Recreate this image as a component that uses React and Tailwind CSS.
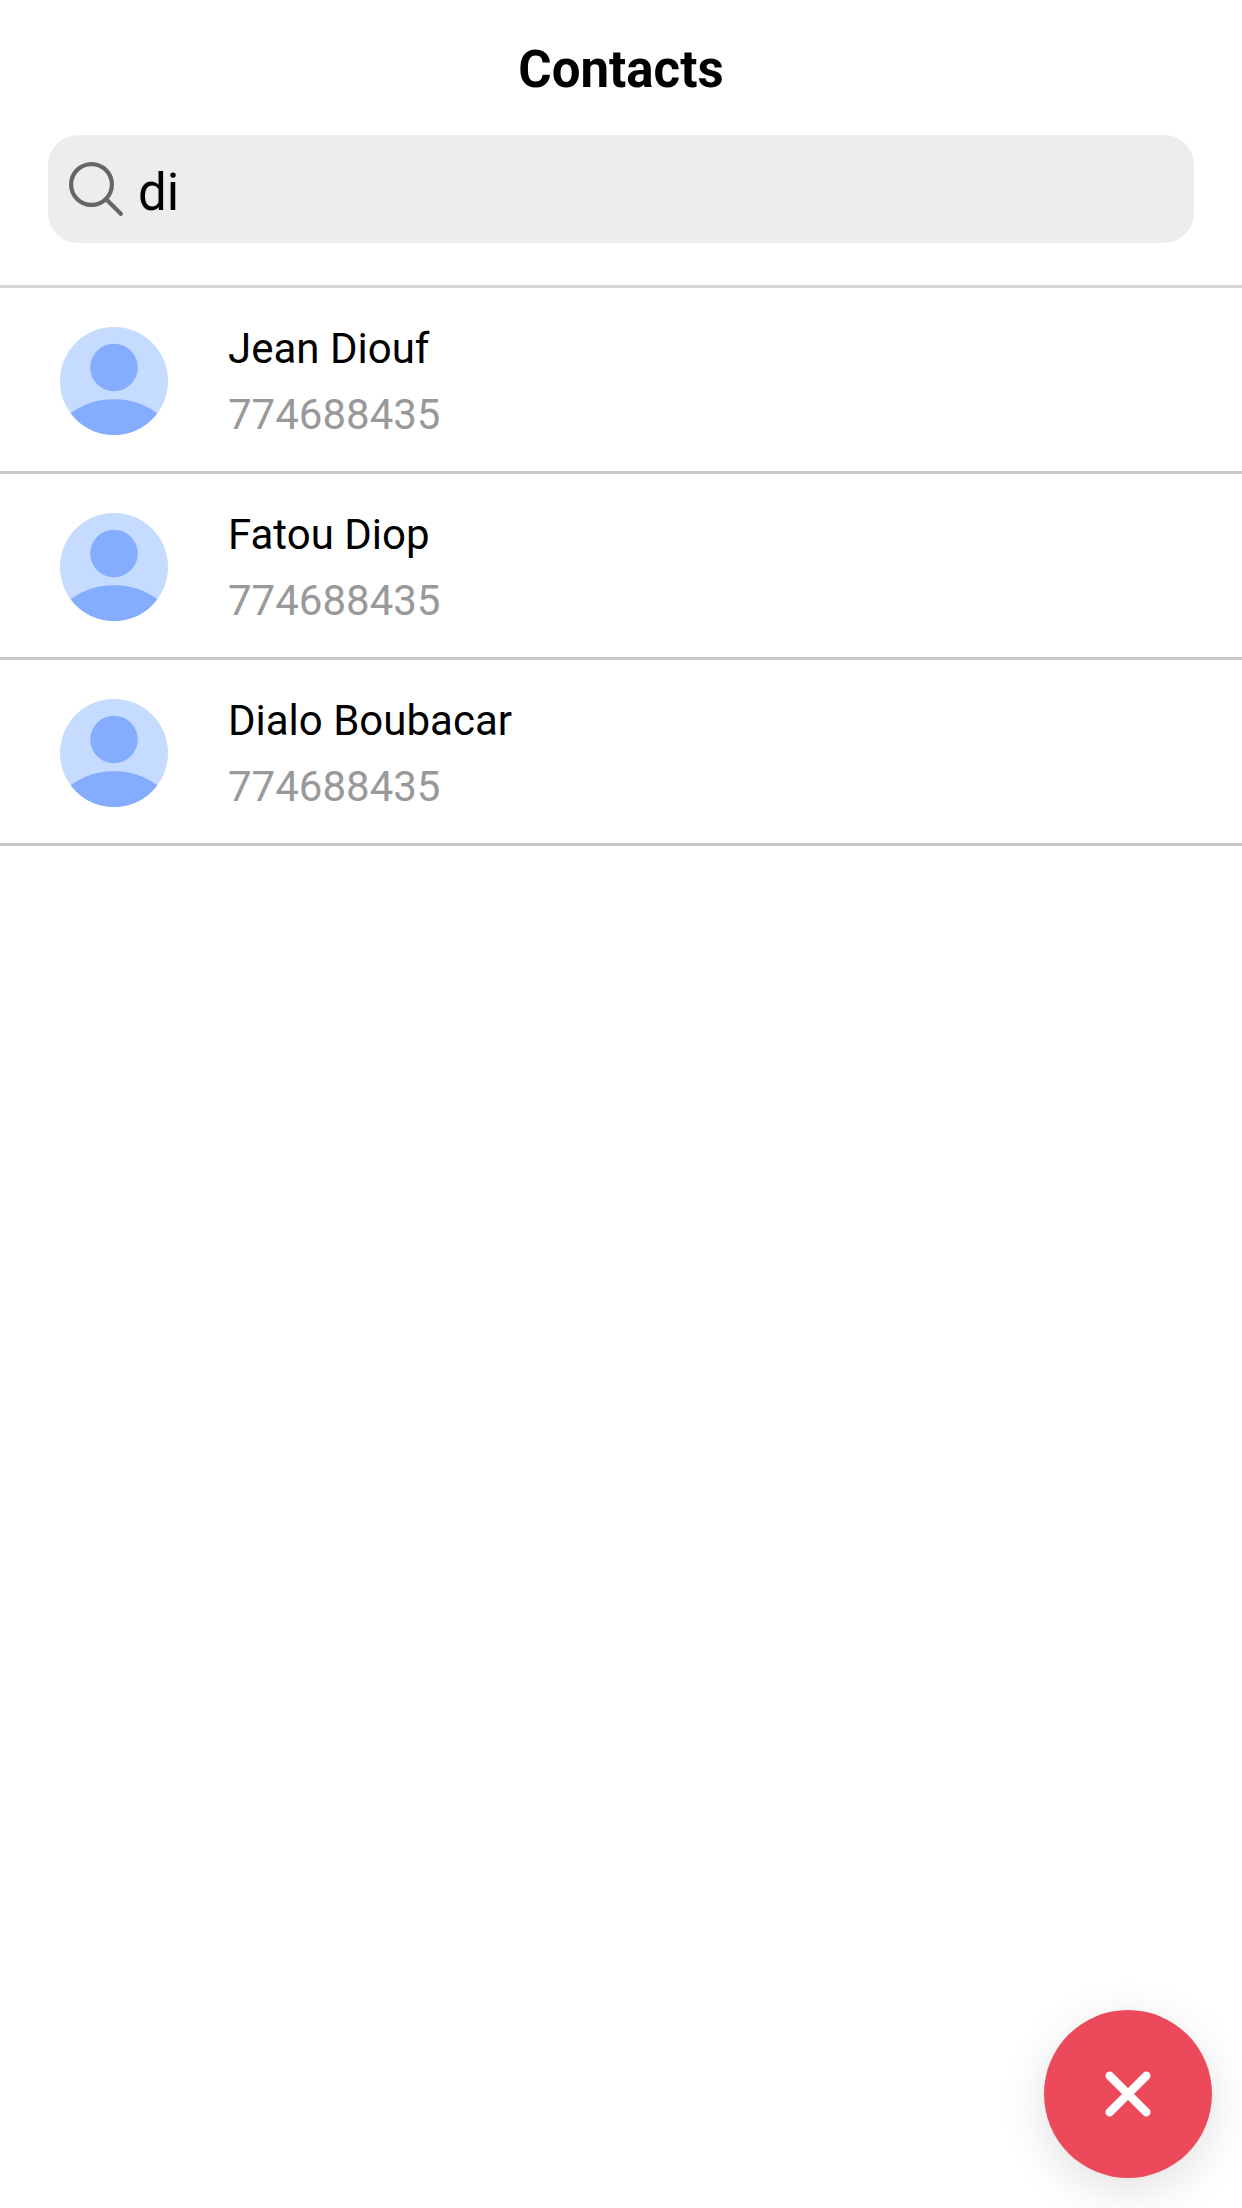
import { useState } from "react";

const contacts = [
  { name: "Jean Diouf", phone: "774688435" },
  { name: "Fatou Diop", phone: "774688435" },
  { name: "Dialo Boubacar", phone: "774688435" },
];

function SearchIcon() {
  return (
    <svg
      viewBox="0 0 54 54"
      className="size-[54px] shrink-0 text-[#666666]"
      fill="none"
      stroke="currentColor"
      strokeWidth="4.2"
      strokeLinecap="round"
      aria-hidden="true"
    >
      <circle cx="22.5" cy="22.5" r="20.4" />
      <path d="M37.2 37.2 51.8 51.8" />
    </svg>
  );
}

function Avatar() {
  return (
    <span className="block size-[108px] shrink-0 overflow-hidden rounded-full" aria-hidden="true">
      <svg viewBox="0 0 108 108" className="size-full">
        <rect width="108" height="108" fill="#c5dbff" />
        <circle cx="54" cy="40.5" r="23.8" fill="#84acff" />
        <path d="M0 96C16 79 34 72.3 54 72.3S92 79 108 96V108H0Z" fill="#84acff" />
      </svg>
    </span>
  );
}

function ContactRow({ name, phone }) {
  return (
    <li className="flex items-center gap-[60px] border-b-3 border-[#c8c7cc] px-[60px] pt-[26px] pb-[23px]">
      <Avatar />
      <div className="min-w-0 pt-0.5 text-[42px] leading-[66px]">
        <h2 className="truncate text-black">{name}</h2>
        <p className="truncate text-[#999999]">{phone}</p>
      </div>
    </li>
  );
}

export default function App() {
  const [query, setQuery] = useState("di");
  const matches = contacts.filter((c) => c.name.toLowerCase().includes(query.toLowerCase()));

  return (
    <div className="min-h-screen bg-white font-[Roboto,sans-serif] text-black">
      <header className="border-b-3 border-[#d5d5d5] px-12 pb-[42px]">
        <h1 className="flex h-[135px] items-center justify-center pt-1.5 text-[51px] font-bold">Contacts</h1>
        <label className="flex h-[108px] items-center gap-[15px] rounded-[30px] bg-[#ededed] px-[21px]">
          <SearchIcon />
          <input
            type="text"
            aria-label="Search contacts"
            value={query}
            onChange={(e) => setQuery(e.target.value)}
            className="h-full min-w-0 flex-1 bg-transparent pt-1.5 text-[51px] text-black outline-none"
          />
        </label>
      </header>

      <ul>
        {matches.map((c) => (
          <ContactRow key={c.name} {...c} />
        ))}
      </ul>

      <button
        type="button"
        aria-label="Close search"
        className="fixed right-[30px] bottom-[30px] flex size-[168px] items-center justify-center rounded-full bg-[#ec4a5b] text-white shadow-[0_12px_48px_rgba(0,0,0,0.12)]"
      >
        <svg viewBox="0 0 46 46" className="size-[46px]" fill="none" stroke="currentColor" strokeWidth="8.4" strokeLinecap="round">
          <path d="M4.7 4.7 41.3 41.3M41.3 4.7 4.7 41.3" />
        </svg>
      </button>
    </div>
  );
}
